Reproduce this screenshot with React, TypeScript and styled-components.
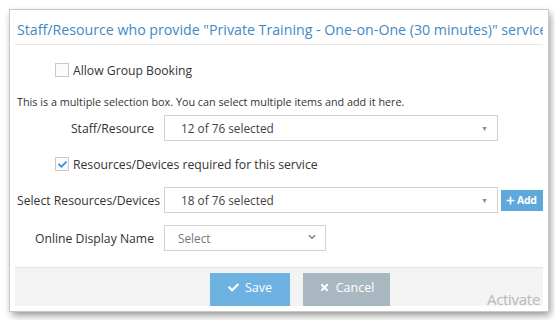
import styled, { createGlobalStyle } from "styled-components";
import { FaCheck, FaTimes, FaPlus, FaChevronDown } from "react-icons/fa";

const Global = createGlobalStyle`
  body {
    margin: 0;
    background: #fff;
    font-family: "Open Sans", "Liberation Sans", sans-serif;
    color: #333;
  }
`;
const Page = styled.div`
  width: 555px;
  height: 320px;
  padding: 10px 7px 9px 10px;
  box-sizing: border-box;
`;
const Frame = styled.div`
  position: relative;
  width: 538px;
  height: 301px;
  box-sizing: border-box;
  border: 5px solid #fff;
  outline: 1px solid #c8c8c8;
  box-shadow: 2px 4px 8px rgba(0, 0, 0, 0.45);
  overflow: hidden;
  display: flex;
  flex-direction: column;
`;
const Header = styled.div`
  height: 29px;
  flex: none;
  border-bottom: 1px solid #e6e6e6;
  padding-left: 2px;
  display: flex;
  align-items: center;
  white-space: nowrap;
  overflow: hidden;
  color: #3f8ac4;
  font-size: 14.2px;
`;
const Body = styled.div`
  flex: 1;
  padding: 18px 0 0 2px;
  display: flex;
  flex-direction: column;
  font-size: 12.2px;
`;
const CheckRow = styled.label<{ $top: number }>`
  display: flex;
  align-items: center;
  gap: 4px;
  margin: ${(p) => p.$top}px 0 0 38px;
  height: 14px;
`;
const Box = styled.span`
  width: 12px;
  height: 12px;
  border: 1px solid #c9c9c9;
  background: #fbfbfb;
  display: flex;
  align-items: center;
  justify-content: center;
  color: #3a8fd0;
  svg {
    width: 9px;
    height: 9px;
  }
`;
const Hint = styled.div`
  margin-top: 17px;
  font-size: 10.8px;
  color: #333;
`;
const Field = styled.div<{ $top: number }>`
  display: grid;
  grid-template-columns: 137px auto auto;
  column-gap: 10px;
  align-items: center;
  justify-content: start;
  margin-top: ${(p) => p.$top}px;
`;
const Label = styled.div`
  text-align: right;
  white-space: nowrap;
`;
const Select = styled.div<{ $w: number }>`
  width: ${(p) => p.$w}px;
  height: 26px;
  box-sizing: border-box;
  border: 1px solid #d2d2d2;
  background: #fff;
  display: flex;
  align-items: center;
  justify-content: space-between;
  padding: 0 9px 0 16px;
  font-size: 11.8px;
  color: #444;
`;
const Caret = styled.span`
  font-size: 7px;
  color: #888;
  svg {
    width: 8px;
    height: 8px;
    color: #777;
  }
`;
const Placeholder = styled.span`
  color: #777;
  margin-left: -3px;
`;
const AddBtn = styled.div`
  margin-left: -7px;
  height: 21px;
  width: 46px;
  background: #5ea8dc;
  color: #fff;
  font-size: 10.5px;
  font-weight: 700;
  display: flex;
  align-items: center;
  gap: 2px;
  padding-left: 5px;
  box-sizing: border-box;
  letter-spacing: -0.3px;
  svg {
    width: 9px;
    height: 9px;
  }
`;
const Footer = styled.div`
  flex: none;
  height: 33px;
  background: #f3f3f3;
  border-top: 1px solid #e4e4e4;
  display: flex;
  justify-content: center;
  align-items: flex-start;
  gap: 13px;
  padding: 5px 0 0 42px;
`;
const Button = styled.div<{ $bg: string; $w: number }>`
  width: ${(p) => p.$w}px;
  height: 34px;
  background: ${(p) => p.$bg};
  color: #fff;
  font-size: 12.5px;
  display: flex;
  align-items: center;
  justify-content: center;
  gap: 6px;
  padding-bottom: 6px;
  box-sizing: border-box;
  svg {
    width: 11px;
    height: 11px;
  }
`;
const Watermark = styled.div`
  position: absolute;
  left: 472px;
  top: 274px;
  font-size: 15px;
  letter-spacing: -0.3px;
  color: #b9b9b9;
  white-space: nowrap;
`;

export default function App() {
  return (
    <Page>
      <Global />
      <Frame>
        <Header>
          Staff/Resource who provide "Private Training - One-on-One (30 minutes)" service
        </Header>
        <Body>
          <CheckRow $top={0}>
            <Box />
            Allow Group Booking
          </CheckRow>
          <Hint>This is a multiple selection box. You can select multiple items and add it here.</Hint>
          <Field $top={6}>
            <Label>Staff/Resource</Label>
            <Select $w={334}>
              12 of 76 selected<Caret>▼</Caret>
            </Select>
          </Field>
          <CheckRow $top={16}>
            <Box>
              <FaCheck />
            </Box>
            Resources/Devices required for this service
          </CheckRow>
          <Field $top={16}>
            <Label>Select Resources/Devices</Label>
            <Select $w={334}>
              18 of 76 selected<Caret>▼</Caret>
            </Select>
            <AddBtn>
              <FaPlus />
              Add
            </AddBtn>
          </Field>
          <Field $top={12}>
            <Label>Online Display Name</Label>
            <Select $w={162}>
              <Placeholder>Select</Placeholder>
              <Caret>
                <FaChevronDown />
              </Caret>
            </Select>
          </Field>
        </Body>
        <Footer>
          <Button $bg="#6db2e1" $w={80}>
            <FaCheck />
            Save
          </Button>
          <Button $bg="#a9b7c1" $w={87}>
            <FaTimes />
            Cancel
          </Button>
        </Footer>
        <Watermark>Activate Windows</Watermark>
      </Frame>
    </Page>
  );
}
